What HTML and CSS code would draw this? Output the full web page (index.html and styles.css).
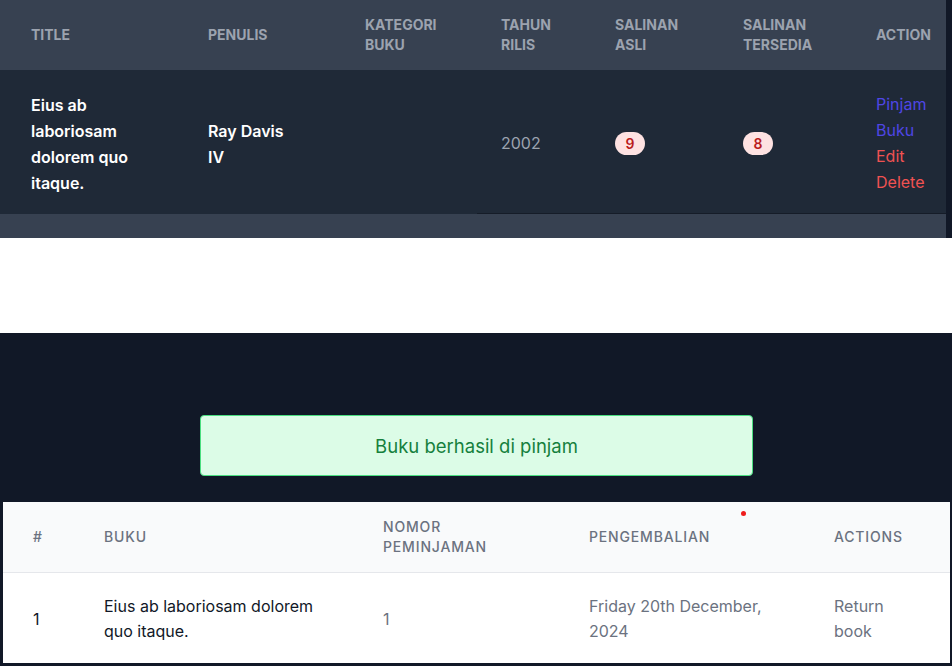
FILE: index.html
```html
<!DOCTYPE html>
<html lang="id">
<head>
<meta charset="utf-8">
<title>Buku</title>
<link rel="stylesheet" href="styles.css">
</head>
<body>
<section class="books">
  <div class="books-wrap">
    <table class="books-table">
      <colgroup>
        <col class="c1"><col class="c2"><col class="c3"><col class="c4"><col class="c5"><col class="c6"><col class="c7">
      </colgroup>
      <thead>
        <tr>
          <th class="first">Title</th>
          <th class="narrow">Penulis</th>
          <th>Kategori Buku</th>
          <th>Tahun Rilis</th>
          <th>Salinan Asli</th>
          <th>Salinan Tersedia</th>
          <th class="last">Action</th>
        </tr>
      </thead>
      <tbody>
        <tr>
          <td class="first strong tall">Eius ab laboriosam dolorem quo itaque.</td>
          <td class="narrow strong tall">Ray Davis IV</td>
          <td></td>
          <td class="line muted">2002</td>
          <td class="line"><span class="badge">9</span></td>
          <td class="line"><span class="badge">8</span></td>
          <td class="line last actions">
            <a class="link-blue" href="#">Pinjam Buku</a>
            <a class="link-red" href="#">Edit</a>
            <a class="link-red" href="#">Delete</a>
          </td>
        </tr>
      </tbody>
    </table>
  </div>
  <div class="edge"></div>
</section>

<div class="spacer"></div>

<section class="loans">
  <div class="alert">Buku berhasil di pinjam</div>
  <div class="loans-card">
    <span class="dot"></span>
    <table class="loans-table">
      <colgroup>
        <col class="l1"><col class="l2"><col class="l3"><col class="l4"><col class="l5">
      </colgroup>
      <thead>
        <tr>
          <th class="lfirst">#</th>
          <th>Buku</th>
          <th class="nomor">Nomor Peminjaman</th>
          <th>Pengembalian</th>
          <th>Actions</th>
        </tr>
      </thead>
      <tbody>
        <tr>
          <td class="lfirst num">1</td>
          <td class="title">Eius ab laboriosam dolorem quo itaque.</td>
          <td class="gray">1</td>
          <td class="gray">Friday 20th December, 2024</td>
          <td class="gray action"><a href="#">Return book</a></td>
        </tr>
      </tbody>
    </table>
  </div>
</section>
</body>
</html>
```

FILE: styles.css
```css
* { box-sizing: border-box; }

html, body {
  margin: 0;
  padding: 0;
  background: #ffffff;
  font-family: "Inter", "Noto Sans", sans-serif;
}

/* ---------- top books table ---------- */
.books {
  display: flex;
  height: 238px;
}

.books-wrap {
  width: 946px;
  background: #374151;
  padding-bottom: 24px;
}

.edge {
  width: 6px;
  background: #111827;
}

.books-table {
  width: 946px;
  table-layout: fixed;
  border-collapse: collapse;
}

.books-table col.c1 { width: 184px; }
.books-table col.c2 { width: 157px; }
.books-table col.c3 { width: 136px; }
.books-table col.c4 { width: 114px; }
.books-table col.c5 { width: 128px; }
.books-table col.c6 { width: 133px; }
.books-table col.c7 { width: 94px; }

.books-table th {
  background: #374151;
  color: #9ca3af;
  font-size: 14px;
  font-weight: 700;
  line-height: 20px;
  text-transform: uppercase;
  text-align: left;
  padding: 15px 24px;
  vertical-align: middle;
}

.books-table td {
  background: #1f2937;
  color: #ffffff;
  font-size: 16px;
  line-height: 26px;
  padding: 21px 24px 18px;
  vertical-align: middle;
  border-bottom: 1px solid #1f2937;
}

.books-table td.tall { padding-top: 22px; padding-bottom: 17px; }

.books-table td.line { border-bottom-color: #151c28; }

.books-table .first { padding-left: 31px; }
.books-table .narrow { padding-right: 50px; }
.books-table .last { padding-left: 24px; padding-right: 8px; }

.strong { font-weight: 600; }
.muted { color: #9ca3af !important; font-size: 17px; }

.badge {
  display: inline-block;
  min-width: 30px;
  height: 23px;
  padding: 0 9px;
  border-radius: 12px;
  background: #fee2e2;
  color: #b91c1c;
  font-size: 14px;
  font-weight: 600;
  line-height: 23px;
  text-align: center;
}

.actions a {
  display: block;
  text-decoration: none;
  font-size: 16px;
  line-height: 26px;
}

.link-blue { color: #4f46e5; }
.link-red { color: #f05252; }

/* ---------- spacer ---------- */
.spacer {
  height: 95px;
  background: #ffffff;
}

/* ---------- loans ---------- */
.loans {
  background: #111827;
  padding: 82px 2px 2px 3px;
  height: 333px;
}

.alert {
  width: 553px;
  height: 61px;
  margin: 0 auto 26px;
  background: #dcfce7;
  border: 1px solid #4ade80;
  border-radius: 4px;
  color: #15803d;
  font-size: 18.5px;
  display: flex;
  align-items: center;
  justify-content: center;
}

.loans-card {
  position: relative;
  background: #ffffff;
}

.dot {
  position: absolute;
  left: 738px;
  top: 9px;
  width: 5px;
  height: 5px;
  border-radius: 50%;
  background: #ef1c1c;
}

.loans-table {
  width: 947px;
  table-layout: fixed;
  border-collapse: collapse;
}

.loans-table col.l1 { width: 77px; }
.loans-table col.l2 { width: 279px; }
.loans-table col.l3 { width: 206px; }
.loans-table col.l4 { width: 245px; }
.loans-table col.l5 { width: 140px; }

.loans-table th {
  background: #f9fafb;
  color: #6b7280;
  font-size: 14px;
  font-weight: 500;
  letter-spacing: 0.06em;
  line-height: 20px;
  text-transform: uppercase;
  text-align: left;
  padding: 15px 24px;
  border-bottom: 1px solid #e5e7eb;
  vertical-align: middle;
}

.loans-table th.nomor { padding-right: 60px; }

.loans-table td {
  font-size: 16px;
  line-height: 25px;
  padding: 21px 24px 19px;
  vertical-align: middle;
  background: #ffffff;
}

.loans-table .lfirst { padding-left: 30px; padding-right: 10px; }

.num { color: #111827; font-size: 18px; }
.title { color: #111827; }
.gray { color: #6b7280; }

.action { padding-right: 50px !important; }
.action a {
  color: #6b7280;
  text-decoration: none;
}
```
